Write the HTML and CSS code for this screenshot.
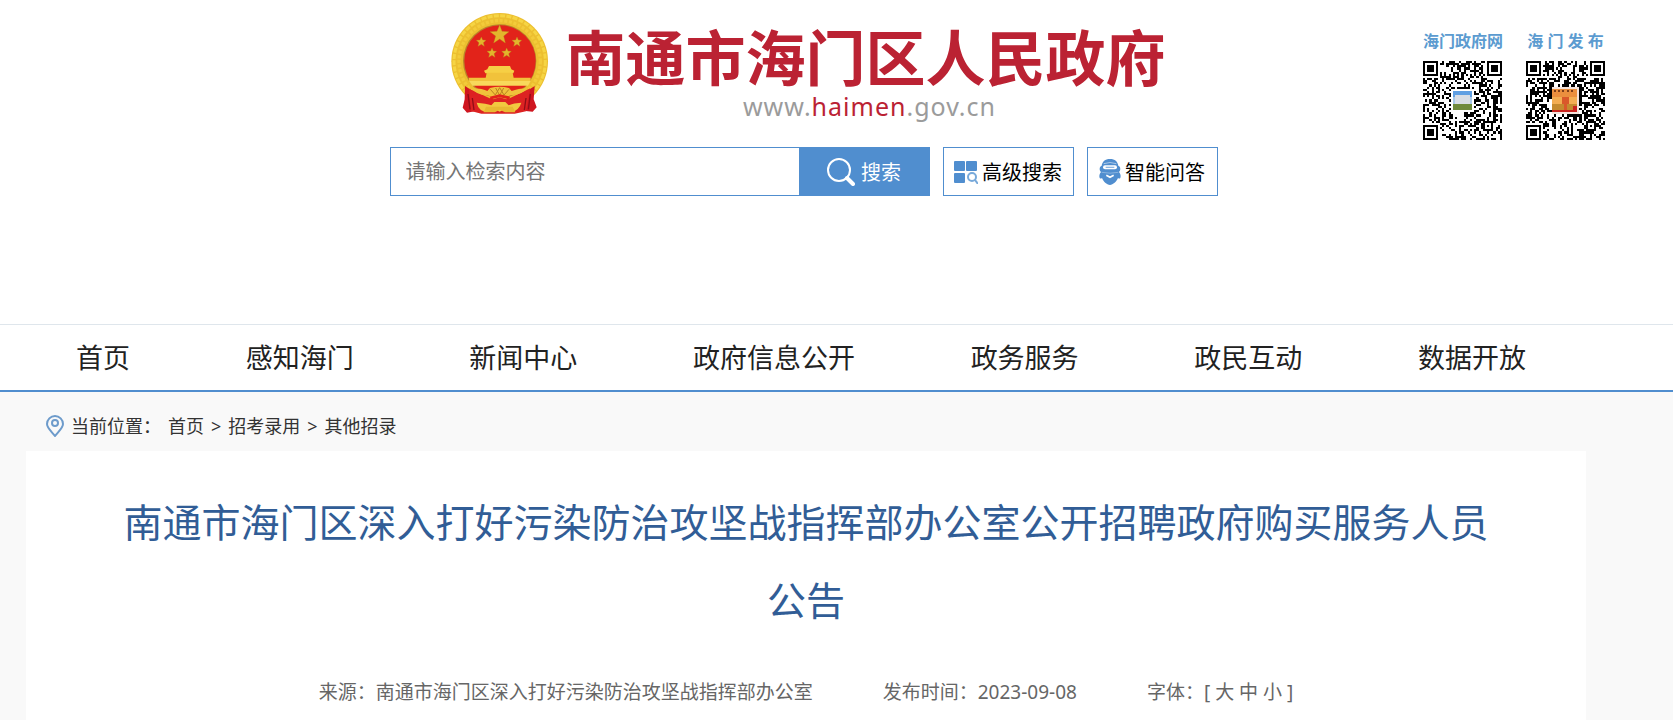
FILE: index.html
```html
<!DOCTYPE html>
<html lang="zh-CN">
<head>
    <meta charset="UTF-8">
    <meta name="viewport" content="width=device-width, initial-scale=1.0">
    <title>南通市海门区人民政府</title>
    <link rel="stylesheet" href="styles.css">
</head>
<body>
    <header class="header">
        <div class="header-main">
            <a class="logo" href="#">
                <svg class="emblem" viewBox="34 34 294 309" aria-hidden="true">
                    <circle cx="180" cy="182" r="145" fill="#ecbf30"/>
                    <circle cx="180" cy="182" r="137" fill="none" stroke="#f6d544" stroke-width="9" stroke-dasharray="15 4"/>
                    <circle cx="180" cy="182" r="122" fill="none" stroke="#f3cb3a" stroke-width="10" stroke-dasharray="9 5"/>
                    <circle cx="180" cy="181" r="110" fill="#b9862a"/>
                    <circle cx="181" cy="181" r="107" fill="#e2231a"/>
                    <g fill="#e3b52c" stroke="#b98a1b" stroke-width="1">
                        <path d="M180 73l7 19 21 1-16 13 5 21-17-12-18 12 6-21-17-13 21-1z"/>
                        <path d="M125 109l4 9 10 1-8 7 3 11-9-6-10 6 3-11-8-7 11-1z"/>
                        <path d="M232 109l4 9 10 1-8 7 3 11-9-6-10 6 3-11-8-7 11-1z"/>
                        <path d="M157 142l4 9 10 1-8 7 3 11-9-6-10 6 3-11-8-7 11-1z"/>
                        <path d="M201 142l4 9 10 1-8 7 3 11-9-6-10 6 3-11-8-7 11-1z"/>
                    </g>
                    <path d="M148 196h63l4 10 9 4-3 8H137l-4-8 10-4z" fill="#f6cf45"/>
                    <path d="M141 216h78l3 15h51v11H88v-11h50z" fill="#f1c23b"/>
                    <path d="M88 241h185l-8 14H98z" fill="#f8d95b"/>
                    <path d="M76 256l38 25-2 49-30 6-13-15 6-25zM285 256l-38 25 4 49 28 3 12-13-9-24z" fill="#cf1620"/>
                    <path d="M88 264l62 29 30-8 30 8 62-30-13 69-34 7H125l-31-8z" fill="#dd2222"/>
                    <path d="M85 280l6 46M272 280l-6 46M98 292l5 36M259 292l-5 36" stroke="#8f0d17" stroke-width="4" fill="none"/>
                    <path d="M96 263q35 1 47 8l8-9q29-8 57 0l8 9q18-7 48-8-20 21-47 20-12 1-17 13l-20-6-20 6q-9-13-22-13-28 0-42-20z" fill="#f0c23b"/>
                    <path d="M152 266l15 17 13-22 13 22 15-17M168 262l12 22 12-22" stroke="#b98220" stroke-width="3" fill="none"/>
                    <path d="M111 306q29 2 44 8l9-10h33l10 10q15-7 38-8-7 25-32 28l-18-9-15 8-16-8-19 9q-28-1-34-28z" fill="#f2c940"/>
                    <path d="M139 318l-7 17h34l14-8 16 8h31l-8-17z" fill="#e8b932"/>
                    <path d="M150 288l30-7 32 7-5 8-27-6-25 6z" fill="#e2231a"/>
                </svg>
                <span class="logo-text">
                    <span class="logo-name">南通市海门区人民政府</span>
                    <span class="logo-url">www.<b>haimen</b>.gov.cn</span>
                </span>
            </a>

            <form class="search">
                <input class="search-input" type="text" placeholder="请输入检索内容" aria-label="请输入检索内容">
                <button class="search-btn" type="submit">
                    <svg width="28" height="28" viewBox="0 0 28 28" fill="none" stroke="#fff" aria-hidden="true">
                        <circle cx="12" cy="12" r="11" stroke-width="2"/>
                        <path d="M20 20l6 6" stroke-width="4" stroke-linecap="round"/>
                    </svg>
                    搜索
                </button>
                <button class="tool-btn" type="button">
                    <svg width="24" height="24" viewBox="0 0 24 24" aria-hidden="true">
                        <rect x="0" y="1" width="11" height="10" rx="1" fill="#508ecf"/>
                        <rect x="12" y="1" width="11" height="10" rx="1" fill="#508ecf"/>
                        <rect x="0" y="13" width="11" height="10" rx="1" fill="#508ecf"/>
                        <circle cx="18" cy="17" r="4" fill="none" stroke="#77a9da" stroke-width="2"/>
                        <path d="M21 20l3 4" stroke="#77a9da" stroke-width="2"/>
                    </svg>
                    高级搜索
                </button>
                <button class="tool-btn" type="button">
                    <svg width="22" height="26" viewBox="0 0 66 78" aria-hidden="true">
                        <path d="M33 0c15 0 23 8 25 20 7 2 8 14 2 19 5 5 6 13 4 18q-3 3-7 0c-4 11-15 20-24 21-10-1-20-10-24-21q-4 3-7 0c-2-5-1-13 4-18-6-5-5-17 2-19C10 8 18 0 33 0z" fill="#508ecf"/>
                        <path d="M14 14q19-7 38 0" fill="none" stroke="#a9c8e8" stroke-width="3"/>
                        <rect x="12" y="19" width="42" height="12" rx="6" fill="#fff"/>
                        <path d="M20 25h26" stroke="#8fb8e2" stroke-width="4"/>
                        <path d="M8 40q25 5 50 0" fill="none" stroke="#88b3df" stroke-width="3"/>
                        <path d="M22 49l11 6 11-6" fill="none" stroke="#fff" stroke-width="5"/>
                    </svg>
                    智能问答
                </button>
            </form>
        </div>

        <div class="qr-list">
            <figure class="qr">
                <figcaption>海门政府网</figcaption>
                <svg class="qr-code" data-seed="7" viewBox="0 0 37 37" shape-rendering="crispEdges" role="img" aria-label="海门政府网">
                    <path class="modules" fill="#000"/>
                    <rect x="13" y="13" width="11" height="11" rx="1" fill="#fff"/>
                    <rect x="14" y="14" width="9" height="5" fill="#5f9fe2"/>
                    <rect x="14" y="17" width="9" height="3" fill="#a9c9e8"/>
                    <path d="M15 16h7v4h-7z" fill="#d8dde4"/>
                    <rect x="14" y="20" width="9" height="3" fill="#6f8a3c"/>
                </svg>
            </figure>
            <figure class="qr">
                <figcaption>海 门 发 布</figcaption>
                <svg class="qr-code" data-seed="23" viewBox="0 0 37 37" shape-rendering="crispEdges" role="img" aria-label="海门发布">
                    <path class="modules" fill="#000"/>
                    <rect x="12" y="12" width="13" height="13" rx="1" fill="#f4e3dc"/>
                    <rect x="12" y="13" width="12" height="4" fill="#eb8f3e"/>
                    <rect x="12" y="17" width="12" height="3" fill="#f3ad52"/>
                    <rect x="12" y="20" width="12" height="3" fill="#c58a2f"/>
                    <path d="M12 23h12v1H12zM22 21h2v3h-2z" fill="#c9231f"/>
                    <path d="M13 14h9" stroke="#7d3d18" stroke-width="1" stroke-dasharray="1 1"/>
                    <path d="M17 17h3v3h-3zM18 20h1v3h-1z" fill="#d9582a"/>
                </svg>
            </figure>
        </div>
    </header>

    <nav class="nav">
        <a href="#">首页</a>
        <a href="#">感知海门</a>
        <a href="#">新闻中心</a>
        <a href="#">政府信息公开</a>
        <a href="#">政务服务</a>
        <a href="#">政民互动</a>
        <a href="#">数据开放</a>
    </nav>

    <main class="content">
        <div class="breadcrumb">
            <svg width="18" height="22" viewBox="0 0 18 22" fill="none" stroke="#6d9bcb" stroke-width="2" aria-hidden="true">
                <path d="M9 21C6 17 1 13 1 9a8 8 0 0 1 16 0c0 4-5 8-8 12z"/>
                <circle cx="9" cy="8" r="3"/>
            </svg>
            <span>当前位置：</span>
            <a href="#">首页</a>
            <span>&gt;</span>
            <a href="#">招考录用</a>
            <span>&gt;</span>
            <a href="#">其他招录</a>
        </div>

        <article class="article">
            <h1>南通市海门区深入打好污染防治攻坚战指挥部办公室公开招聘政府购买服务人员公告</h1>
            <div class="meta">
                <span>来源：南通市海门区深入打好污染防治攻坚战指挥部办公室</span>
                <span>发布时间：2023-09-08</span>
                <span class="font-size">
                    字体：[
                    <button type="button">大</button>
                    <button type="button">中</button>
                    <button type="button">小</button>
                    ]
                </span>
            </div>
        </article>
    </main>

    <script src="qr.js"></script>
</body>
</html>
```

FILE: styles.css
```css
* {
    box-sizing: border-box;
}

body {
    margin: 0;
    background-color: #f9f9f9;
    color: #222;
    font-family: "Noto Sans", "Noto Sans CJK SC", sans-serif;
    font-size: 20px;
}

a {
    color: inherit;
    text-decoration: none;
}

button,
input {
    font-family: inherit;
    font-size: 20px;
}

button {
    cursor: pointer;
}

.header {
    display: grid;
    grid-template-columns: 1fr auto 1fr;
    min-height: 324px;
    padding: 12px 68px 0 2px;
    background-color: #fff;
}

.header-main {
    grid-column: 2;
}

.logo {
    display: flex;
    gap: 17px;
    height: 135px;
    padding-left: 61px;
}

.emblem {
    width: 98px;
    height: 103px;
}

.logo-text {
    display: flex;
    flex-direction: column;
    align-items: center;
    padding-top: 16px;
}

.logo-name {
    color: #bb2233;
    font-size: 60px;
    font-weight: bold;
    line-height: 60px;
}

.logo-url {
    padding-left: 8px;
    color: #9b9b9b;
    font-size: 25px;
    line-height: 36px;
    letter-spacing: 1px;
}

.logo-url b {
    color: #bb2233;
    font-weight: normal;
}

.search {
    display: flex;
    height: 49px;
}

.search-input {
    width: 409px;
    padding: 0 15px;
    border: 1px solid #508ecf;
    border-right: none;
    outline: none;
    background-color: #fff;
}

.search-input::placeholder {
    color: #757575;
}

.search-btn,
.tool-btn {
    display: flex;
    justify-content: center;
    align-items: center;
    width: 131px;
    padding: 0;
    border: 1px solid #508ecf;
}

.search-btn {
    gap: 6px;
    background-color: #508ecf;
    color: #fff;
}

.tool-btn {
    gap: 4px;
    margin-left: 13px;
    background-color: #fff;
    color: #000;
}

.qr-list {
    display: flex;
    justify-content: flex-end;
    gap: 24px;
    padding-top: 18px;
}

.qr {
    margin: 0;
    width: 79px;
}

.qr figcaption {
    height: 31px;
    color: #5b9bd0;
    font-size: 16px;
    font-weight: bold;
    line-height: 22px;
    text-align: center;
    white-space: nowrap;
}

.qr-code {
    display: block;
    width: 79px;
    height: 79px;
}

.nav {
    display: flex;
    justify-content: space-between;
    padding: 0 147px 0 76px;
    border-top: 1px solid #dfe6ec;
    border-bottom: 2px solid #508ecf;
    background-color: #fff;
    font-size: 27px;
    line-height: 65px;
}

.content {
    margin: 0 87px 0 26px;
}

.breadcrumb {
    display: flex;
    align-items: center;
    gap: 7px;
    height: 59px;
    padding: 8px 0 0 20px;
    color: #333;
    font-size: 18px;
    line-height: 24px;
}

.article {
    min-height: 269px;
    padding: 32px 90px 0;
    background-color: #fff;
}

.article h1 {
    margin: 0;
    color: #315d96;
    font-size: 39px;
    font-weight: normal;
    line-height: 78px;
    text-align: center;
}

.meta {
    display: flex;
    justify-content: center;
    gap: 70px;
    padding-top: 33px;
    color: #666;
    font-size: 19px;
    line-height: 40px;
}

.font-size button {
    padding: 0;
    border: none;
    background: none;
    color: inherit;
    font-size: 19px;
}
```

FILE: qr.js
```js
const SIZE = 37;

// 7x7 finder square: dark ring, light ring, dark centre
function finder(x, y, left, top) {
    const d = Math.max(Math.abs(x - left - 3), Math.abs(y - top - 3));
    return d > 4 ? null : d === 3 || d < 2;
}

function isDark(x, y, random) {
    const corners = [[0, 0], [SIZE - 7, 0], [0, SIZE - 7]];
    for (const [left, top] of corners) {
        const dark = finder(x, y, left, top);
        if (dark !== null) return dark;
    }
    const d = Math.max(Math.abs(x - 30), Math.abs(y - 30));
    if (d < 3) return d !== 1;
    if (x === 6 || y === 6) return (x + y) % 2 === 0;
    return random < 0.5;
}

document.querySelectorAll('.qr-code').forEach(svg => {
    let seed = Number(svg.dataset.seed);
    let d = '';
    for (let y = 0; y < SIZE; y++) {
        for (let x = 0; x < SIZE; x++) {
            seed = (seed * 1103515 + 12345) % 2147483648;
            if (isDark(x, y, seed / 2147483648)) d += `M${x} ${y}h1v1h-1z`;
        }
    }
    svg.querySelector('.modules').setAttribute('d', d);
});
```
